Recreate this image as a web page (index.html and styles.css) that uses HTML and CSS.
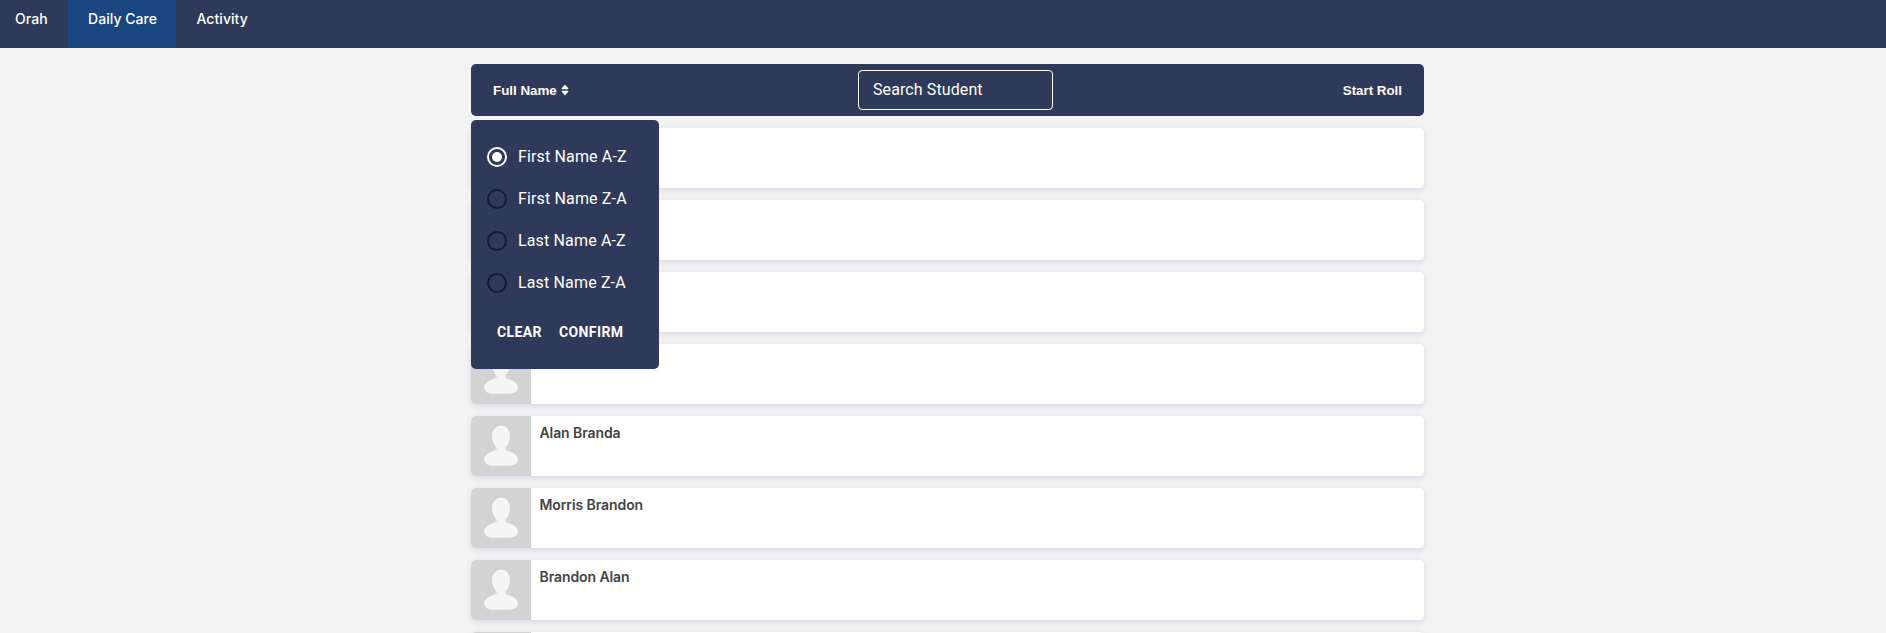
FILE: index.html
```html
<!DOCTYPE html>
<html lang="en">
<head>
<meta charset="utf-8">
<title>Daily Care</title>
<link rel="stylesheet" href="styles.css">
</head>
<body>
<svg class="defs" width="0" height="0" aria-hidden="true">
  <symbol id="person" viewBox="0 0 60 60">
    <path d="M30 9.800C35.500 9.800 39 14.200 39 20C39 25 37 29 34.300 31.800C34 33.300 34.800 34 37 34.800C42.500 36.500 47 39.500 47 43.500C47 48.300 42 49.800 36 49.800H24C18 49.800 13 48.300 13 43.500C13 39.500 17.500 36.500 23 34.800C25.200 34 26 33.300 25.700 31.800C23 29 21 25 21 20C21 14.200 24.500 9.800 30 9.800Z"/>
  </symbol>
</svg>
<nav class="nav">
  <a class="tab tab-home">Orah</a>
  <a class="tab tab-care active">Daily Care</a>
  <a class="tab tab-activity">Activity</a>
</nav>
<main class="page">
  <header class="toolbar">
    <div class="sort"><span class="sort-label">Full Name</span><svg class="sort-icon" viewBox="0 0 8 12"><path d="M4 .5L7.300 4.200Q7.600 5.200 6.800 5.200H1.200Q.4 5.200 .7 4.200ZM4 11.500L.7 7.800Q.4 6.800 1.200 6.800H6.800Q7.600 6.800 7.300 7.800Z"/></svg></div>
    <div class="search">Search Student</div>
    <div class="start"><span class="start-label">Start Roll</span></div>
    <div class="menu">
      <div class="option checked"><i class="radio"></i><span class="option-label">First Name A-Z</span></div>
      <div class="option"><i class="radio"></i><span class="option-label">First Name Z-A</span></div>
      <div class="option"><i class="radio"></i><span class="option-label">Last Name A-Z</span></div>
      <div class="option"><i class="radio"></i><span class="option-label">Last Name Z-A</span></div>
      <div class="actions"><span class="clear">CLEAR</span><span class="confirm">CONFIRM</span></div>
    </div>
  </header>
  <section class="list">
    <div class="card"><svg class="avatar"><use href="#person"/></svg></div>
    <div class="card"><svg class="avatar"><use href="#person"/></svg></div>
    <div class="card"><svg class="avatar"><use href="#person"/></svg></div>
    <div class="card"><svg class="avatar"><use href="#person"/></svg></div>
    <div class="card"><svg class="avatar"><use href="#person"/></svg><span class="name">Alan Branda</span></div>
    <div class="card"><svg class="avatar"><use href="#person"/></svg><span class="name">Morris Brandon</span></div>
    <div class="card"><svg class="avatar"><use href="#person"/></svg><span class="name">Brandon Alan</span></div>
    <div class="card"><svg class="avatar"><use href="#person"/></svg></div>
  </section>
</main>
</body>
</html>
```
FILE: styles.css
```css
* { box-sizing: border-box; }
body {
  margin: 0;
  background: #f3f3f3;
  font-family: Inter, "Liberation Sans", sans-serif;
}
.defs { display: block; }
.nav { display: flex; height: 48px; background: #2f3959; }
.tab {
  padding-top: 9px;
  color: #fff;
  font-size: 14px;
  font-weight: 500;
  line-height: 20px;
  letter-spacing: .05px;
  white-space: nowrap;
}
.tab-home { width: 68px; padding-left: 15px; }
.tab-care { width: 108px; padding-left: 20px; }
.tab-activity { padding-left: 20.500px; }
.active { background: #1b4780; }
.page {
  height: 585px;
  padding: 16px 462px 0 471px;
  overflow: hidden;
}
.toolbar {
  position: relative;
  display: grid;
  grid-template-columns: 387px 195px 1fr;
  align-items: center;
  height: 52px;
  border-radius: 5px;
  background: #2f3959;
  color: #fff;
}
.sort, .start {
  display: flex;
  align-items: center;
  font: bold 13.333px/20px "Liberation Sans", Arial, sans-serif;
}
.sort { padding-left: 22px; gap: 4px; }
.sort-label, .start-label { padding-top: 1px; }
.start { justify-content: flex-end; padding-right: 22px; }
.sort-icon { width: 8px; height: 12px; fill: #fff; }
.search {
  height: 40px;
  padding-left: 14px;
  border: 1px solid #fff;
  border-radius: 4px;
  font: 400 16px/37px Roboto, sans-serif;
  letter-spacing: .1px;
}
.menu {
  position: absolute;
  top: 56px;
  left: 0;
  z-index: 1;
  width: 188px;
  height: 249px;
  padding-top: 16px;
  border-radius: 5px;
  background: #2f3959;
  font-family: Roboto, sans-serif;
}
.option { display: flex; align-items: center; gap: 11px; height: 42px; padding-left: 16px; }
.option-label { font-size: 16px; line-height: 24px; letter-spacing: .15px; white-space: nowrap; }
.radio {
  display: grid;
  place-items: center;
  width: 20px;
  height: 20px;
  border: 2px solid #161c2d;
  border-radius: 50%;
}
.checked .radio { border-color: #fff; }
.checked .radio::after { content: ""; width: 10px; height: 10px; border-radius: 50%; background: #fff; }
.actions {
  display: flex;
  gap: 17px;
  padding: 18px 0 0 26px;
  font-size: 14px;
  font-weight: 700;
  line-height: 20px;
  letter-spacing: .4px;
}
.list { display: grid; gap: 12px; padding-top: 12px; }
.card {
  display: flex;
  height: 60px;
  overflow: hidden;
  border-radius: 5px;
  background: #fff;
  box-shadow: 0 2px 7px rgba(5, 46, 125, .13);
}
.avatar { width: 60px; height: 60px; background: #d3d3d3; fill: #f5f5f5; }
.name { padding: 7px 0 0 8.500px; color: #434343; font-size: 14px; font-weight: 600; line-height: 20px; letter-spacing: -.09px; }
```
